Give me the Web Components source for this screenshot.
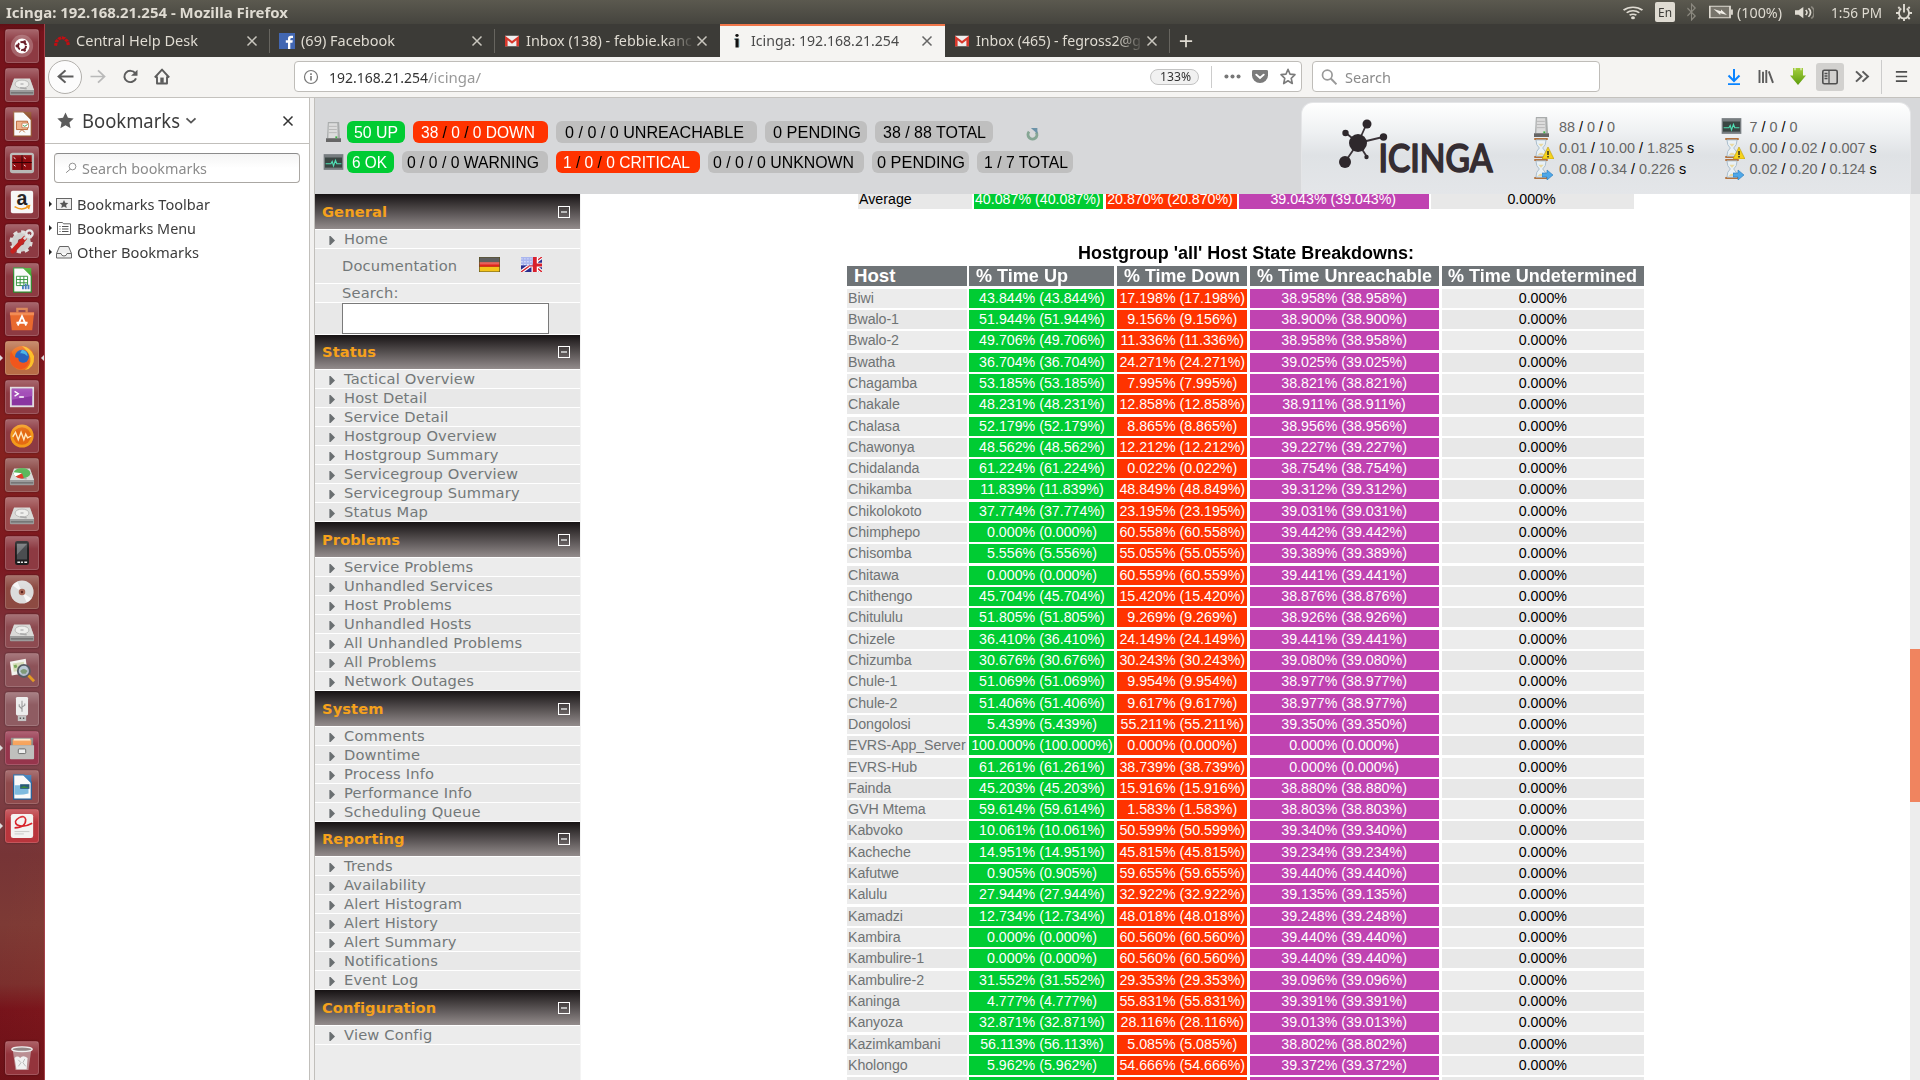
<!DOCTYPE html>
<html lang="en">
<head>
<meta charset="utf-8">
<title>Icinga: 192.168.21.254 - Mozilla Firefox</title>
<style>
html,body{margin:0;width:1920px;height:1080px;overflow:hidden;background:#fff;font-family:"Noto Sans",sans-serif}
</style>
</head>
<body>
<desktop-shell></desktop-shell>
<script>
const I = {
star:'<path d="M8 .5l2.3 5 5.4.6-4 3.7 1.1 5.4L8 12.5l-4.8 2.7 1.1-5.4-4-3.7 5.4-.6z" fill="#5c5c5c"/>',
starline:'<path d="M8 1.2l2 4.6 5 .5-3.8 3.4 1.1 4.9L8 12l-4.3 2.6 1.1-4.9L1 6.3l5-.5z" fill="none" stroke="#7b7b7b" stroke-width="1.6" stroke-linejoin="round"/>',
close:'<path d="M3.5 3.5l9 9M12.5 3.5l-9 9" stroke="currentColor" stroke-width="1.5" fill="none"/>',
plus:'<path d="M8 1v14M1 8h14" stroke="currentColor" stroke-width="2"/>',
back:'<path d="M15.5 8H1.5M8 1.5L1.5 8 8 14.5" fill="none" stroke="#5c5c5c" stroke-width="2"/>',
fwd:'<path d="M.5 8h14M8 1.5L14.500 8 8 14.5" fill="none" stroke="#b9b9b9" stroke-width="1.8"/>',
reload:'<path d="M13.300 4.500A6 6 0 1 0 14 10" fill="none" stroke="#5c5c5c" stroke-width="2"/><path d="M15.500 .8V7.200H9z" fill="#5c5c5c"/>',
home:'<path d="M.8 9L8 1.500 15.200 9M3 8v6.600h10V8" fill="none" stroke="#5c5c5c" stroke-width="1.9" stroke-linejoin="round"/><path d="M6.300 14V9h3.400v5z" fill="#5c5c5c"/>',
info:'<circle cx="8" cy="8" r="6.500" fill="none" stroke="#777" stroke-width="1.200"/><path d="M8 7v4.500M8 4.300v1.600" stroke="#777" stroke-width="1.600"/>',
dots:'<g fill="#777"><circle cx="2.300" cy="8" r="1.900"/><circle cx="8" cy="8" r="1.900"/><circle cx="13.700" cy="8" r="1.900"/></g>',
pocket:'<path d="M0 2.500Q0 1 1.500 1h13Q16 1 16 2.500V7a8 8 0 0 1-16 0z" fill="#7b7b7b"/><path d="M4.300 6L8 9.500 11.700 6" fill="none" stroke="#fff" stroke-width="2" stroke-linecap="round"/>',
mag:'<circle cx="6.300" cy="6" r="4.800" fill="none" stroke="#999" stroke-width="1.700"/><path d="M9.800 9.500L15.500 15.300" stroke="#999" stroke-width="2"/>',
magl:'<circle cx="10" cy="6" r="4.500" fill="none" stroke="#888" stroke-width="1.200"/><path d="M7 9.500L1.500 14.300" stroke="#888" stroke-width="1.300"/>',
dl:'<path d="M8 0v11.500M2.500 6.500L8 12l5.500-5.500M2 15.200h12" fill="none" stroke="#0a84ff" stroke-width="2"/>',
lib:'<path d="M1.500 1v14M5 3v12M8.300 1v14M10.800 2.500l4.200 12.300" fill="none" stroke="#5c5c5c" stroke-width="1.900"/>',
green:'<defs><linearGradient id="g" x2="0" y2="1"><stop stop-color="#a4cf3e"/><stop offset="1" stop-color="#5c9b0c"/></linearGradient></defs><path d="M3 0h1.500v2h1V0h5v2h1V0H13v7h3l-8 9-8-9h3z" fill="url(#g)"/>',
side:'<rect x=".8" y="1.300" width="14.400" height="13.400" rx="1.500" fill="none" stroke="#4f4f4f" stroke-width="1.600"/><path d="M7 1.500v13M2.500 4.500h3M2.500 7h3M2.500 9.500h3" stroke="#4f4f4f" stroke-width="1.300"/>',
more:'<path d="M2 2.500L7.500 8 2 13.500M8.500 2.500L14 8l-5.500 5.500" fill="none" stroke="#5c5c5c" stroke-width="2"/>',
burger:'<path d="M2 2.300h12M2 8h12M2 13.700h12" stroke="#4f4f4f" stroke-width="2"/>',
chev:'<path d="M2 5l6 6 6-6" fill="none" stroke="#555" stroke-width="2.400"/>',
ch:'<path d="M1.500 13.500L2.500 8.500 5.500 5 8 4.200 10.500 5 13.500 8.500 14.500 13.500" fill="none" stroke="#c40d12" stroke-width="3.200" stroke-dasharray="3.200 .9"/>',
fb:'<rect width="16" height="16" fill="#4267b2"/><path d="M9 16V9.700H6.800V7.300H9V5.500Q9 2.700 12 2.700h2V5h-1.400q-1.300 0-1.300 1.200v1.100h2.500l-.4 2.400h-2.100V16z" fill="#fff"/>',
gm:'<path d="M1 2h14v12H1z" fill="#eee"/><path d="M1 14V2l7 6 7-6v12h-2.600V7L8 11 3.600 7v7z" fill="#d8372b"/>',
ii:'<circle cx="8" cy="1.800" r="1.700" fill="#111"/><path d="M5.500 5h4.200v10.500H6.500V6.600h-1z" fill="#111"/><path d="M5 5.300h1.500M10.400 6v9" stroke="#9ed0dc" stroke-width=".8"/>',
wifi:'<g fill="none" stroke="#dfdbd2" stroke-width="1.600"><path d="M.5 5.500a10.500 10.500 0 0 1 15 0M3 8.300a7 7 0 0 1 10 0M5.300 11a4 4 0 0 1 5.400 0"/></g><circle cx="8" cy="13.500" r="1.600" fill="#dfdbd2"/>',
bt:'<path d="M3 4.500l9.500 7L8 15V1l4.500 3.500-9.500 7" fill="none" stroke="#8b887f" stroke-width="1.300"/>',
bat:'<path d="M.5 1.500h13.500v13H.5z" fill="#77746b" stroke="#dfdbd2" stroke-width="1.200"/><path d="M15.300 5v6" stroke="#dfdbd2" stroke-width="1.200"/><path d="M3 4.500l5 2.500v-2l4 6.500-4.500-2v2z" fill="#f0ede6"/>',
spk:'<path d="M0 5.500h3L7 2v12l-4-3.500H0z" fill="#dfdbd2"/><g fill="none" stroke-width="1.500"><path d="M9 5.300a4 4 0 0 1 0 5.400M11.300 3.500a6.500 6.500 0 0 1 0 9" stroke="#dfdbd2"/><path d="M13.700 1.500a9.500 9.500 0 0 1 0 13" stroke="#8b887f"/></g>',
gear:'<path d="M5.300 4.300a5 5 0 1 0 5.400 0" fill="none" stroke="#dfdbd2" stroke-width="1.800"/><path d="M8 8V0M13 8.500h3M0 8.500h3M3.700 4.200L2.300 2.800M12.300 4.200l1.400-1.400M4 12.500l-1.700 1.700M12 12.500l1.700 1.700M8 13.500V16" stroke="#dfdbd2" stroke-width="1.900"/>',
tb:'<rect x=".5" y="2.500" width="15" height="11" fill="#eee" stroke="#666"/><path d="M8 4l1.300 2.700 3 .3-2.200 2 .6 3L8 10.500 5.300 12l.6-3-2.200-2 3-.3z" fill="#555"/>',
bm:'<path d="M1.500 2.500h5l1 1.300h7v10.700h-13z" fill="#fff" stroke="#666"/><path d="M3.500 6.500h1M6 6.500h6.500M3.500 9h1M6 9h6.500M3.500 11.500h1M6 11.500h6.500" stroke="#555"/>',
ob:'<path d="M.5 9.500L3.500 2.500h9l3 7v4.500H.5zM.5 9.500H5q.5 2.500 3 2.500t3-2.500h4.500" fill="#eee" stroke="#666"/>',
server:'<path d="M2 0h12l1 13H1z" fill="#a9acac"/><path d="M3 1h9l.5 12H2.500z" fill="#dcdcdc"/><path d="M3 3.500h8.500M3 6h8.500M3 8.500h8.500" stroke="#b5b5b5" stroke-width=".8"/><path d="M0 13h16v3H0z" fill="#666"/><path d="M10 11.500h2v1.500h-2z" fill="#3cb043"/>',
mon:'<path d="M.5 1h15v14H.5z" fill="#777d80"/><path d="M1.500 4h13v9h-13z" fill="#3a4643"/><path d="M2 9.500h4l1-2 1 4 1.500-5 1 3h3.500" fill="none" stroke="#50dfb4" stroke-width=".9"/>',
hg:'<path d="M2 .8h12M2 15.200h12" stroke="#b5733d" stroke-width="1.700"/><path d="M3.500 1.500h9q0 4.500-3 6.500 3 2 3 6.500h-9q0-4.500 3-6.500-3-2-3-6.500z" fill="#e9f1f7" stroke="#a8bac8" stroke-width=".8"/><path d="M5.500 4.500h5L8 7zM5 13.500q3-3.500 6 0z" fill="#ead9a0"/>',
refresh:'<path d="M3.800 4.500A5.500 5.500 0 1 0 12.500 5" fill="none" stroke="#86a694" stroke-width="3.600"/><path d="M6 0h8v7z" fill="#6c93a8"/>',
de:'<rect width="16" height="16" fill="#222"/><rect y="5.500" width="16" height="5" fill="#e0251b"/><rect y="10.500" width="16" height="5.500" fill="#f4c41a"/><path d="M0 0h16v8H0z" fill="#fff" opacity=".28"/><path d="M0 0h16v16H0z" fill="none" stroke="#5a5120"/>',
uk:'<rect width="16" height="16" fill="#2a2d8c"/><path d="M0 16L16 0M8 7l8 9" stroke="#fff" stroke-width="3.500"/><path d="M0 16L16 0M8 7l8 9" stroke="#d8202c" stroke-width="1.300"/><path d="M10.500 0v16M6 8.500h10" stroke="#fff" stroke-width="5"/><path d="M10.500 0v16M6 8.500h10" stroke="#d8202c" stroke-width="3"/><path d="M0 0h9v9H0z" fill="#aab6ee"/><path d="M0 2h9M0 5h9M0 8h9" stroke="#dfe4fb" stroke-dasharray="1.300 1"/>',
arrow:'<path d="M1 0h3l12 8-12 8H1z" fill="#6a6f71"/>',
tri:'<path d="M0 0l16 8L0 16z" fill="#222"/>'
};
const disk='<path d="M5 8h18l4 12v4q0 1-1 1H2q-1 0-1-1v-4z" fill="#9c9c9c"/><path d="M5.500 7h17L27 19.500H1z" fill="#dadad8"/><ellipse cx="14" cy="13" rx="7.500" ry="4.300" fill="#eeeeec" stroke="#b5b5b3"/><ellipse cx="14" cy="13" rx="2" ry="1.100" fill="#c4c4c4"/><path d="M12 17l7 1" stroke="#aaa" stroke-width="1.500"/><path d="M2 22.500h24" stroke="#5a5a5a"/>';
const doc=(c,k,inner)=>`<path d="M5 1h11l8 8v18H5z" fill="#fafafa" stroke="${c}" stroke-width="1.300"/><path d="M15 1h9v9z" fill="${k}"/>${inner}`;
const L=[
['#8d3a42','<circle cx="14" cy="14" r="12" fill="#fff" opacity=".22"/><circle cx="14" cy="14" r="8" fill="#fff"/><circle cx="14" cy="14" r="4.300" fill="none" stroke="#6b1f2a" stroke-width="2.200" stroke-dasharray="7.500 1.500"/><g fill="#6b1f2a"><circle cx="8.500" cy="14" r="1.500"/><circle cx="16.800" cy="9.300" r="1.500"/><circle cx="16.800" cy="18.700" r="1.500"/></g>'],
['#8d3a42',disk],
['#8d3a42',doc('#93502f','#8b4a22','<path d="M8 11h12v9H8z" fill="#efb38d" stroke="#b96435"/><path d="M14 13h7v5h-7z" fill="#fff" stroke="#b96435" stroke-width=".7"/><path d="M15 15.500l2 1 3-2" stroke="#3a9a4a" fill="none"/><path d="M11 23l3-3 3 3" stroke="#b96435" fill="none"/>')],
['#8d3a42','<rect x="1" y="3" width="26" height="22" rx="3" fill="#b8b8b6"/><rect x="3.500" y="5.500" width="21" height="16" fill="#8e0c10"/><path d="M3.500 13.500h21M14 5.500v16" stroke="#2a0204"/><path d="M5 8l2 1.500M16 8l2 1.500M5 16l2 1.500M16 16l2 1.500" stroke="#fff"/>'],
['#8d3a42','<rect x="2" y="2" width="24" height="24" rx="2" fill="#f6f6f6"/><text x="14" y="17" font-family="Liberation Sans" font-weight="bold" font-size="21" text-anchor="middle" fill="#222">a</text><path d="M6 19q8 5 15 0M18.500 18.500l3.500-.5-1 3.500" fill="none" stroke="#f19a1c" stroke-width="1.700"/>'],
['#8d3a42','<circle cx="13" cy="15" r="7" fill="none" stroke="#cfcfcd" stroke-width="7"/><circle cx="13" cy="15" r="11" fill="none" stroke="#dededc" stroke-width="3" stroke-dasharray="4.600 4"/><path d="M4 25L17 11" stroke="#c5231f" stroke-width="5" stroke-linecap="round"/><path d="M16 12l5-5" stroke="#d8d8d8" stroke-width="3"/><circle cx="22" cy="6" r="3.500" fill="none" stroke="#e4e4e4" stroke-width="2.500"/>'],
['#8d3a42',doc('#2c8a2c','#3faa2c','<path d="M8 10h12v10H8z" fill="#fff" stroke="#32923a"/><path d="M8 13.500h12M8 17h12M12 10v10M16 10v10" stroke="#32923a"/><path d="M15 24v-4M18 24v-6M21 24v-5" stroke="#4a7dc0" stroke-width="2"/>')],
['#8d3a42','<path d="M9 7V3h10v4" fill="none" stroke="#d77a47" stroke-width="2.500"/><path d="M1 7h26l-2 19H3z" fill="#e8692e"/><path d="M1 7h26v3H1z" fill="#f28a52"/><path d="M9.500 21L14 11l4.500 10M8 18h12" fill="none" stroke="#fff" stroke-width="2"/>'],
['#b86c46','<circle cx="14" cy="14" r="13" fill="#f0701d"/><path d="M14 1Q24 3 27 12q.5 13-10 15 7-5 6-13-1-6-9-13z" fill="#fbc02a"/><circle cx="14" cy="12.500" r="7.500" fill="#2a63bd"/><path d="M2 5q2 9 8 9 0 5 5 5 5 0 7-4-1 10-9 11Q1 25 1 13z" fill="#f0561d"/><path d="M14 5q6 1 6 7-4-4-8-3z" fill="#49b4e6"/>',1],
['#8d3a42','<rect x="1" y="3" width="26" height="22" fill="#e0dce0"/><rect x="3" y="5" width="22" height="18" fill="#8a35a0"/><path d="M3 5h22v8L3 17z" fill="#a44fb8"/><path d="M6 8l4 2.500L6 13M11 14h5" fill="none" stroke="#fff" stroke-width="1.500"/>'],
['#8d3a42','<circle cx="14" cy="14" r="12.500" fill="#f39a1b"/><circle cx="14" cy="14" r="9.500" fill="#e46a12"/><path d="M4 15l3-5 3 8 3-8 3 8 2-6 2 4 4-2" fill="none" stroke="#ffe9c0" stroke-width="1.500"/>'],
['#8d4a47',disk+'<ellipse cx="14" cy="12" rx="9" ry="5.500" fill="#5cb85c"/><path d="M14 12L7 15.500q4 3 9 2z" fill="#e23c2c"/><path d="M14 12l-9-1q0 3 2 4.500z" fill="#fff"/>'],
['#9a4a4c',disk],
['#8d3a42','<rect x="6.500" y="1" width="15" height="26" rx="2.500" fill="#1c1c1e"/><path d="M8.500 4h11v17h-11z" fill="#4b4d50"/><path d="M8.500 4h11L8.500 16z" fill="#77797c"/><path d="M9 24h3M13 24h2M16.500 24h3" stroke="#eee" stroke-width="1.500"/>'],
['#8d4a42','<circle cx="14" cy="14" r="12.500" fill="#dcdcdc"/><path d="M14 14L4 7A12.500 12.500 0 0 1 9 3zM14 14l10 7a12.500 12.500 0 0 1-5 4z" fill="#f6f6f6"/><circle cx="14" cy="14" r="3.500" fill="#a96a5a"/><circle cx="14" cy="14" r="1.300" fill="#5b2520"/>'],
['#8d4a50',disk],
['#8d5258','<path d="M1 5l17-3 2 15-17 3z" fill="#f3f3ee"/><path d="M4 7l12-2 1 9-12 2z" fill="#d5dcb8"/><path d="M5 9l3-1 1 3-3 1z" fill="#7aa85a"/><circle cx="16" cy="15" r="6.500" fill="#b8c8d8" fill-opacity=".9" stroke="#555c64" stroke-width="2"/><path d="M12 15q4-4 8 0l-2 3h-4z" fill="#7f9a78"/><path d="M21 20l6 6" stroke="#e39b24" stroke-width="3"/>'],
['#8f5c62','<rect x="7.500" y="1" width="13" height="20" rx="1.500" fill="#ececec"/><path d="M9.500 21h9v6h-9z" fill="#c4c4c4"/><path d="M11.500 24h1.500M15 24h1.500" stroke="#555" stroke-width="1.500"/><path d="M14 5v12M14 14l-3-3V9M14 12l3-2V8" fill="none" stroke="#999" stroke-width="1.200"/>'],
['#96354c','<path d="M2 3h24v10H2z" fill="#8a8a88"/><path d="M4 5h20v6H4z" fill="#f7a35c"/><path d="M5 4h18v2H5z" fill="#fbe7c8"/><path d="M1 11h26v14q0 1-1 1H2q-1 0-1-1z" fill="#bfbfbd"/><rect x="10" y="15" width="8" height="5" rx="1" fill="#eee" stroke="#666"/>',2],
['#8f4a4c',doc('#1f5f9a','#2f77b8','<path d="M6 12h15v9q-8 2-15 1z" fill="#7fbadf"/><path d="M12 11h10v5H12z" fill="#2a5a78"/><path d="M12 15l4-2 6 2z" fill="#3a8a3a"/>')],
['#b9353c','<rect x="2" y="1" width="24" height="26" rx="2.500" fill="#f3f3f1"/><path d="M6 16q12 0 12-9-1-5-7-2-7 4-2 8 7 3 16-2" fill="none" stroke="#d8232a" stroke-width="1.700"/><path d="M6 20h16M6 22.500h10" stroke="#c8c8c6"/>',2]
];
const trash=['#94343c','<path d="M4 5h20l-3 22H7z" fill="#d8d8d8" fill-opacity=".55"/><path d="M6 14q3-3 6 0 3-4 8 0l-1 12H8z" fill="#f1f1f1"/><path d="M10 16l3 3-3 4M17 15l-2 4 3 4" stroke="#b5b5b5" fill="none"/><ellipse cx="14" cy="4.500" rx="11" ry="2.500" fill="#8a7b7b" stroke="#eee" stroke-width="1.500"/>'];

class Base extends HTMLElement{
  constructor(){super();this.attachShadow({mode:'open'});}
  connectedCallback(){this.shadowRoot.innerHTML=`<style>*{box-sizing:border-box}${this.css()}</style>${this.html()}`;this.after&&this.after();}
}
customElements.define('ui-icon',class extends Base{
  css(){const w=this.getAttribute('w')||16,h=this.getAttribute('h')||w;return `:host{display:block;flex:none;width:${w}px;height:${h}px}svg{display:block}`}
  html(){const w=this.getAttribute('w')||16,h=this.getAttribute('h')||w;return `<svg width="${w}" height="${h}" viewBox="0 0 16 16" preserveAspectRatio="none">${I[this.getAttribute('n')]}</svg>`}
});
/* Label that squeezes its slotted text into a set width. */
customElements.define('fit-text',class extends Base{
  css(){return `:host{display:block;flex:none;width:${this.getAttribute('w')}px;white-space:nowrap}span{display:inline-block;transform-origin:0 50%;white-space:pre}`}
  html(){return '<span><slot></slot></span>'}
  after(){const s=this.shadowRoot.querySelector('span'),n=s.offsetWidth;const r=s.getBoundingClientRect().width||n;s.style.transform=`scaleX(${this.getAttribute('w')/r})`;}
});
customElements.define('top-bar',class extends Base{
  css(){return `:host{display:flex;height:24px;align-items:center;padding-left:6px;background:linear-gradient(#5b594f,#45443e);color:#dfdbd2;font-size:14.500px;line-height:24px}
  b{flex:1;display:block}.t{font-weight:bold}.r{display:flex;align-items:center;height:24px;width:297px;flex:none}
  .en{background:#dfdbd2;color:#3c3b37;width:20px;height:20px;border-radius:2px;margin:0 10px 0 12px;padding-left:3px;line-height:20px;font-size:13px;flex:none}`}
  html(){return `<fit-text class="t" w="282">Icinga: 192.168.21.254 - Mozilla Firefox</fit-text><b></b><div class="r"><ui-icon n="wifi" w="20" h="15"></ui-icon><div class="en"><fit-text w="14">En</fit-text></div><ui-icon n="bt" w="13" h="18" style="margin-right:11px"></ui-icon><ui-icon n="bat" w="24" h="14" style="margin-right:4px"></ui-icon><fit-text w="45">(100%)</fit-text><ui-icon n="spk" w="19" h="15" style="margin:0 17px 0 13px"></ui-icon><fit-text w="51">1:56 PM</fit-text><ui-icon n="gear" w="16" h="17" style="margin-left:14px"></ui-icon></div>`}
});
customElements.define('app-launcher',class extends Base{
  css(){return `:host{display:flex;flex-direction:column;width:45px;height:1056px;padding:5px 0 0 5px;gap:5px;border-right:1px solid #a54048;background:linear-gradient(100deg,transparent 70%,#ff60300c),linear-gradient(#5f0f15 0,#76131b 8px,#7a141c 330px,#86221f 420px,#7c1820 540px,#7e4149 640px,#80444c 740px,#763436 830px,#7d3a35 900px,#7a2f2d 960px,#76131b 985px,#6a1017 1056px)}
  .t{position:relative;width:34px;height:34px;flex:none;border-radius:3px;padding:3px;border:1px solid #ffffff2a;box-shadow:0 0 2px #0007}
  .t svg{display:block;width:26px;height:26px;overflow:visible}.g{flex:1}.trash{margin-bottom:5px}
  .t::after{content:"";position:absolute;left:0;right:0;top:0;height:12px;background:linear-gradient(#ffffff38,#fff0)}
  .a::before{content:"";position:absolute;left:-6px;top:13px;border:3px solid transparent;border-left-color:#ddd}
  .f{position:absolute;left:35px;top:13px;border:3px solid transparent;border-right-color:#ddd;border-left:0}`}
  html(){const t=(x,c='')=>`<div class="t ${c} ${x[2]?'a':''}" style="background:${x[0]}"><svg viewBox="0 0 28 28">${x[1]}</svg>${x[2]==1?'<i class="f"></i>':''}</div>`;return L.map(x=>t(x)).join('')+'<div class="g"></div>'+t(trash,'trash')}
});
customElements.define('browser-tab',class extends Base{
  css(){const a=this.hasAttribute('active');return `:host{display:flex;flex:none;align-items:center;width:225px;height:33px;padding:0 0 0 9px;font-size:14.500px;line-height:33px;color:${a?'#4a4a4a':'#dfdbd2'};${a?'background:#f5f4f2;box-shadow:inset 0 2px #f0764a;':''}}
  :host{box-sizing:border-box}.x{width:167px;flex:none;margin:0 1px 0 6px}.x.fade{mask:linear-gradient(90deg,#000 84%,transparent 101%)}.c{width:16px;color:${a?'#666':'#c9c6be'}}.s{width:1px;height:24px;margin-left:9px;background:#67655f;flex:none}`}
  html(){const f=this.hasAttribute('fade');return `<ui-icon n="${this.getAttribute('icon')}" w="16" h="${this.getAttribute('icon')=='fb'?16:14}"></ui-icon><div class="x ${f?'fade':''}"><fit-text w="${this.getAttribute('w')}"><slot></slot></fit-text></div><ui-icon class="c" n="close"></ui-icon>${this.hasAttribute('sep')?'<i class="s"></i>':''}`}
});
customElements.define('tab-strip',class extends Base{
  css(){return `:host{display:flex;height:33px;background:#3c3b37;align-items:center;color:#dfdbd2}`}
  html(){return `<browser-tab icon="ch" w="122" sep>Central Help Desk</browser-tab><browser-tab icon="fb" w="94" sep>(69) Facebook</browser-tab><browser-tab icon="gm" w="166" fade>Inbox (138) - febbie.kanc</browser-tab><browser-tab icon="ii" w="148" active>Icinga: 192.168.21.254</browser-tab><browser-tab icon="gm" w="165" fade sep>Inbox (465) - fegross2@g</browser-tab><ui-icon n="plus" w="14" style="margin-left:9px"></ui-icon>`}
});
customElements.define('nav-bar',class extends Base{
  css(){return `:host{display:flex;box-sizing:border-box;height:41px;align-items:center;background:#f5f4f2;border-bottom:1px solid #c4c2be;padding:0 11px 1px 3px;font-size:14.500px;line-height:28px;color:#333}
  .b{width:34px;height:34px;border:1px solid #b2b0ac;border-radius:50%;background:#fcfcfc;display:flex;align-items:center;justify-content:center}
  .u,.s{height:31px;border:1px solid #bfbdb9;border-radius:4px;background:#fff;display:flex;align-items:center}
  .u{width:1008px;margin-left:124px;padding-left:8px}.s{width:288px;margin-left:10px;padding-left:8px;color:#8b8b8b}.g{color:#999}
  .z{width:49px;height:16px;border:1px solid #c3c3c3;border-radius:8px;background:#f1f1f1;line-height:14px;font-size:12.500px;padding-left:9px;margin-left:669px}
  .v{width:1px;height:22px;background:#ccc;margin:0 12px}.sb{width:28px;height:28px;border-radius:3px;background:#d2d1cf;display:flex;align-items:center;justify-content:center;margin:0 10px}.h{flex:1}`}
  html(){return `<div class="b"><ui-icon n="back" w="17" h="15"></ui-icon></div><ui-icon n="fwd" w="16" h="15" style="margin-left:8px"></ui-icon><ui-icon n="reload" w="16" h="15" style="margin-left:16px"></ui-icon><ui-icon n="home" w="16" h="17" style="margin-left:16px"></ui-icon>
  <div class="u"><ui-icon n="info" w="16"></ui-icon><fit-text w="99" style="margin-left:10px">192.168.21.254</fit-text><fit-text w="53" class="g">/icinga/</fit-text><div class="z"><fit-text w="31">133%</fit-text></div><i class="v"></i><ui-icon n="dots" w="17"></ui-icon><ui-icon n="pocket" w="16" h="15" style="margin-left:11px"></ui-icon><ui-icon n="starline" w="16" h="17" style="margin-left:12px"></ui-icon></div>
  <div class="s"><ui-icon n="mag" w="16"></ui-icon><fit-text w="46" style="margin-left:8px">Search</fit-text></div><b class="h"></b>
  <ui-icon n="dl" w="16"></ui-icon><ui-icon n="lib" w="16" h="15" style="margin-left:16px"></ui-icon><ui-icon n="green" w="16" h="17" style="margin:0 0 0 16px"></ui-icon><div class="sb"><ui-icon n="side" w="16"></ui-icon></div><ui-icon n="more" w="16" h="15"></ui-icon><i class="v" style="height:34px;margin:0 12px 0 11px"></i><ui-icon n="burger" w="15" h="13"></ui-icon>`}
});
customElements.define('bookmark-panel',class extends Base{
  css(){return `:host{display:block;width:265px;height:982px;background:#fff;border-right:1px solid #c1bfbb;color:#3c3c3c}
  .h{display:flex;height:46px;align-items:center;border-bottom:1px solid #c1bfbb;padding:0 13px 0 12px;font-size:19.500px;line-height:44px}
  .s{display:flex;align-items:center;width:246px;height:30px;margin:9px 0 9px 9px;border:1px solid #aaa7a3;border-top-color:#8b8b8b;border-radius:4px;padding-left:10px;background:linear-gradient(#f4f4f4,#fff 50%);color:#8b8b8b;font-size:14.500px;line-height:27px}
  .r{display:flex;align-items:center;height:24px;font-size:14.500px;line-height:24px;padding-left:4px}.r ui-icon+ui-icon{margin:0 5px 0 4px}`}
  html(){const r=(n,w,t)=>`<div class="r"><ui-icon n="tri" w="3" h="6"></ui-icon><ui-icon n="${n}" w="16" h="16"></ui-icon><fit-text w="${w}">${t}</fit-text></div>`;
  return `<div class="h"><ui-icon n="star" w="17"></ui-icon><fit-text w="98" style="margin-left:8px">Bookmarks</fit-text><ui-icon n="chev" w="12" h="11" style="margin-left:5px"></ui-icon><b style="flex:1"></b><ui-icon n="close" w="16" style="color:#333"></ui-icon></div>
  <div class="s"><ui-icon n="magl" w="12"></ui-icon><fit-text w="125" style="margin-left:5px">Search bookmarks</fit-text></div>${r('tb',133,'Bookmarks Toolbar')}${r('bm',119,'Bookmarks Menu')}${r('ob',122,'Other Bookmarks')}`}
});
customElements.define('state-pill',class extends Base{
  css(){const k=this.getAttribute('k');return `:host{display:flex;flex:none;box-sizing:border-box;align-items:center;height:22px;border-radius:6px;width:${this.getAttribute('w')}px;padding:2px 0 0 ${this.getAttribute('p')}px;background:${k=='g'?'#00cc33':k=='r'?'#ff3300':'#bfbfbf'};color:${k?'#fff':'#000'};font-size:16px;line-height:20px}`}
  html(){return `<fit-text w="${this.getAttribute('t')}"><slot></slot></fit-text>`}
});
customElements.define('perf-column',class extends Base{
  css(){return `:host{display:flex;flex-direction:column;flex:none;width:190.500px;font-size:14.400px;line-height:21px;color:#666}
  .r{display:flex;height:21.200px;align-items:center}.i{width:22px;height:21px;display:flex;justify-content:center;margin-right:7px;position:relative}.v{white-space:pre}b{font-weight:normal;color:#000}
  .w{position:absolute;right:-2px;bottom:0}`}
  html(){const v=t=>`<span class="v">${t.replace(/( \/ | s$)/g,'<b>$1</b>')}</span>`;
  const [a,b,c]=this.getAttribute('rows').split('|');
  return `<div class="r"><div class="i"><ui-icon n="${this.getAttribute('icon')}" w="${this.getAttribute('icon')=='mon'?21:15}" h="${this.getAttribute('icon')=='mon'?18:20}"></ui-icon></div>${v(a)}</div>
  <div class="r"><div class="i"><ui-icon n="hg" w="18" h="20"></ui-icon><svg class="w" width="12" height="12"><path d="M6 0l6 12H0z" fill="#f6d31c" stroke="#b8980c" stroke-width=".6"/><path d="M6 4v4M6 9v1.500" stroke="#222" stroke-width="1.400"/></svg></div>${v(b)}</div>
  <div class="r"><div class="i"><ui-icon n="hg" w="18" h="20"></ui-icon><svg class="w" width="12" height="11"><path d="M0 4h5V1l6 5-6 5V8H0z" fill="#4fa8e8" stroke="#2a78b8" stroke-width=".6"/></svg></div>${v(c)}</div>`}
});
customElements.define('icinga-header',class extends Base{
  css(){return `:host{display:flex;box-sizing:border-box;height:96px;background:#d7d8da;font-family:"Liberation Sans",sans-serif;padding-right:9px}
  .p{flex:1;padding:23px 0 0 7px;display:flex;flex-direction:column;gap:8px}.r{display:flex;height:22px;gap:8px;align-items:center}.i{width:22px;display:flex;justify-content:center;margin-right:-5px}
  .c{width:610px;margin-top:4px;height:92px;border-radius:12px 12px 0 0;border:1px solid #e4e5e7;border-bottom:0;background:linear-gradient(#fff 0,#eef0f2 30px,#dfe2e5 52px,#e4e6e9 92px);display:flex}
  .l{flex:none;width:160px;height:60px;margin:16px 32px 0 36px;display:block;overflow:visible}.c perf-column{margin-top:14px}`}
  html(){const P=(k,w,p,t,s)=>`<state-pill ${k?`k="${k}"`:''} w="${w}" p="${p}" t="${t}">${s}</state-pill>`;
  const sl=s=>s.replace(/\//g,'<span style="color:#000">/</span>');
  return `<div class="p"><div class="r"><div class="i"><ui-icon n="server" w="15" h="20"></ui-icon></div>${P('g',58,7,44,'50 UP')}${P('r',135,8,114,sl('38 / 0 / 0 DOWN'))}${P('',201,9,179,'0 / 0 / 0 UNREACHABLE')}${P('',102,8,88,'0 PENDING')}${P('',118,8,103,'38 / 88 TOTAL')}<ui-icon n="refresh" w="13" h="13" style="margin:4px 0 0 25px"></ui-icon></div>
  <div class="r"><div class="i"><ui-icon n="mon" w="21" h="18"></ui-icon></div>${P('g',47,5,35,'6 OK')}${P('',146,5,132,'0 / 0 / 0 WARNING')}${P('r',144,7,127,sl('1 / 0 / 0 CRITICAL'))}${P('',156,5,141,'0 / 0 / 0 UNKNOWN')}${P('',97,5,88,'0 PENDING')}${P('',96,7,84,'1 / 7 TOTAL')}</div></div>
  <div class="c"><svg class="l" viewBox="0 0 160 60"><g stroke="#3a3338" stroke-width="1.800"><path d="M20 24L29 4M20 24L8 14M20 24L45 18M20 24l9 14M20 24L7 43"/></g><g fill="#2e282c"><circle cx="20" cy="24" r="9"/><circle cx="29" cy="5" r="4.500"/><circle cx="7.500" cy="14" r="3.200"/><circle cx="45.500" cy="18" r="3.700"/><circle cx="28.500" cy="38" r="2.200"/><circle cx="7" cy="43" r="6"/></g>
  <text x="40.500" y="52.500" textLength="114" lengthAdjust="spacingAndGlyphs" font-family="Lato" font-weight="500" font-size="38" fill="#352d32" stroke="#352d32" stroke-width="1.700" stroke-linejoin="round">ICINGA</text></svg>
  <perf-column icon="server" rows="88 / 0 / 0|0.01 / 10.00 / 1.825 s|0.08 / 0.34 / 0.226 s"></perf-column><perf-column icon="mon" rows="7 / 0 / 0|0.00 / 0.02 / 0.007 s|0.02 / 0.20 / 0.124 s"></perf-column></div>`}
});
customElements.define('menu-section',class extends Base{
  css(){return `:host{display:block}.h{display:flex;align-items:center;justify-content:space-between;height:${this.getAttribute('h')}px;padding:0 10px 0 7px;background:linear-gradient(#171314,#938c8c);color:#f5a11c;font-weight:bold;font-size:14.670px}.h span{padding-bottom:1px;letter-spacing:.08px}
  .m{width:12px;height:12px;border:1.500px solid #fff;display:flex;align-items:center;justify-content:center}.m::after{content:"";width:6px;height:2px;background:#bbb}
  .b{display:flex;flex-direction:column;border-top:1px solid #fff}`}
  html(){return `<div class="h"><span>${this.getAttribute('t')}</span><i class="m"></i></div><div class="b"><slot></slot></div>`}
});
customElements.define('menu-item',class extends Base{
  css(){return `:host{display:flex;box-sizing:border-box;align-items:center;height:19px;border-bottom:1px solid #fff;background:#ececec;padding:0 0 1px 14px;font-size:14.670px;letter-spacing:.18px;line-height:17px;color:#737879}:host(:nth-child(even)){background:#e8e8e8}:host(:not([plain])) ui-icon{margin:3px 9px 0 0}:host([plain]){padding-left:27px}`}
  html(){return (this.hasAttribute('plain')?'':'<ui-icon n="arrow" w="6" h="9"></ui-icon>')+'<slot></slot>'}
});
customElements.define('icinga-menu',class extends Base{
  css(){return `:host{display:block;width:266px;height:886px;box-sizing:border-box;background:#ececec;border-right:1px solid #f4f4f4;font-family:"DejaVu Sans",sans-serif}
  .in{display:block;width:207px;height:31px;border:1px solid #7a7a7a;background:#fff}`}
  html(){const s=(t,h,items)=>`<menu-section t="${t}" h="${h}">${items.split('|').map(i=>`<menu-item>${i}</menu-item>`).join('')}</menu-section>`;
  return `<menu-section t="General" h="35"><menu-item>Home</menu-item><menu-item plain style="height:35px">Documentation<ui-icon n="de" w="21" h="15" style="margin:-3px 21px 0 22px"></ui-icon><ui-icon n="uk" w="21" h="15" style="margin-top:-3px"></ui-icon></menu-item><menu-item plain>Search:</menu-item><menu-item plain style="height:32px;padding-bottom:0"><i class="in"></i></menu-item></menu-section>`
  +s('Status',34,'Tactical Overview|Host Detail|Service Detail|Hostgroup Overview|Hostgroup Summary|Servicegroup Overview|Servicegroup Summary|Status Map')
  +s('Problems',35,'Service Problems|Unhandled Services|Host Problems|Unhandled Hosts|All Unhandled Problems|All Problems|Network Outages')
  +s('System',35,'Comments|Downtime|Process Info|Performance Info|Scheduling Queue')
  +s('Reporting',34,'Trends|Availability|Alert Histogram|Alert History|Alert Summary|Notifications|Event Log')
  +s('Configuration',35,'View Config')}
});
const D=`Biwi 43.844 17.198 38.958
Bwalo-1 51.944 9.156 38.900
Bwalo-2 49.706 11.336 38.958
Bwatha 36.704 24.271 39.025
Chagamba 53.185 7.995 38.821
Chakale 48.231 12.858 38.911
Chalasa 52.179 8.865 38.956
Chawonya 48.562 12.212 39.227
Chidalanda 61.224 0.022 38.754
Chikamba 11.839 48.849 39.312
Chikolokoto 37.774 23.195 39.031
Chimphepo 0.000 60.558 39.442
Chisomba 5.556 55.055 39.389
Chitawa 0.000 60.559 39.441
Chithengo 45.704 15.420 38.876
Chitululu 51.805 9.269 38.926
Chizele 36.410 24.149 39.441
Chizumba 30.676 30.243 39.080
Chule-1 51.069 9.954 38.977
Chule-2 51.406 9.617 38.977
Dongolosi 5.439 55.211 39.350
EVRS-App_Server 100.000 0.000 0.000
EVRS-Hub 61.261 38.739 0.000
Fainda 45.203 15.916 38.880
GVH_Mtema 59.614 1.583 38.803
Kabvoko 10.061 50.599 39.340
Kacheche 14.951 45.815 39.234
Kafutwe 0.905 59.655 39.440
Kalulu 27.944 32.922 39.135
Kamadzi 12.734 48.018 39.248
Kambira 0.000 60.560 39.440
Kambulire-1 0.000 60.560 39.440
Kambulire-2 31.552 29.353 39.096
Kaninga 4.777 55.831 39.391
Kanyoza 32.871 28.116 39.013
Kazimkambani 56.113 5.085 38.802
Kholongo 5.962 54.666 39.372`.split('\n').map(l=>l.split(' '));
customElements.define('breakdown-table',class extends Base{
  css(){return `:host{display:block;box-sizing:border-box;flex:1;height:886px;overflow:hidden;font-family:"Liberation Sans",sans-serif;font-size:14.220px;padding-left:266px;color:#000}
  .row{display:grid;grid-template-columns:119.800px 145px 130.300px 189px 202.300px;column-gap:2.670px;height:18.670px;margin-bottom:2.663px;line-height:19px;text-align:center;white-space:nowrap}
  .row div{background:#ececec}.row.e div{background:#e8e8e8}.row div:first-child{text-align:left;padding-left:1px;color:#6f7374}.n{letter-spacing:-.06px}
  .row div:nth-child(2){background:#00cc33;color:#fff}.row div:nth-child(3){background:#ff3300;color:#fff}.row div:nth-child(4){background:#c043b1;color:#fff;padding-right:1px}
  .avg{grid-template-columns:114px 129px 131px 190px 203px;column-gap:2.250px;margin-left:11px;height:15px;line-height:10.500px}.avg div:first-child{color:#000!important}.avg div{background:#e8e8e8;padding-right:2px}
  h3{margin:34px 0 3px;height:20px;line-height:20px;font-size:18px;padding-left:231px}
  .head{height:20px;font-weight:bold;font-size:18.670px;line-height:19.500px;margin-bottom:2.670px}.head div,.head div:first-child{background:#6f7477!important;color:#fff!important;text-align:left;padding-left:7px!important}.head div:nth-child(n+4){padding-left:6.500px!important}`}
  html(){const p=x=>`${x}% (${x}%)`;
  return `<div class="row avg"><div>Average</div><div>${p('40.087')}</div><div>${p('20.870')}</div><div>${p('39.043')}</div><div>0.000%</div></div>
  <h3><fit-text w="336">Hostgroup 'all' Host State Breakdowns:</fit-text></h3>
  <div class="row head"><div>Host</div><div><fit-text w="92">% Time Up</fit-text></div><div><fit-text w="116">% Time Down</fit-text></div><div><fit-text w="175">% Time Unreachable</fit-text></div><div><fit-text w="189">% Time Undetermined</fit-text></div></div>`
  +D.map((r,i)=>`<div class="row ${i%2?'e':''}"><div class="n">${r[0]=='GVH_Mtema'?'GVH Mtema':r[0]}</div><div>${p(r[1])}</div><div>${p(r[2])}</div><div>${p(r[3])}</div><div>0.000%</div></div>`).join('')
  +`<div class="row e"><div></div><div></div><div></div><div></div><div></div></div>`}
});
customElements.define('desktop-shell',class extends Base{
  css(){return `:host{display:flex;flex-direction:column;width:1920px;height:1080px;overflow:hidden}
  .m{display:flex;height:1056px}.w{width:1875px}.c{display:flex}.sp{width:5px;background:#f2f1f0;border-right:1px solid #c1bfbb;flex:none}.pg{flex:1;height:982px;background:#fff}
  .b{display:flex}.sc{width:10px;height:886px;background:#ededed;padding-top:455px;flex:none}.sc i{display:block;height:153px;background:#f0845f}`}
  html(){return `<top-bar></top-bar><div class="m"><app-launcher></app-launcher><div class="w"><tab-strip></tab-strip><nav-bar></nav-bar><div class="c"><bookmark-panel></bookmark-panel><div class="sp"></div><div class="pg"><icinga-header></icinga-header><div class="b"><icinga-menu></icinga-menu><breakdown-table></breakdown-table><div class="sc"><i></i></div></div></div></div></div></div>`}
});
</script>
</body>
</html>
